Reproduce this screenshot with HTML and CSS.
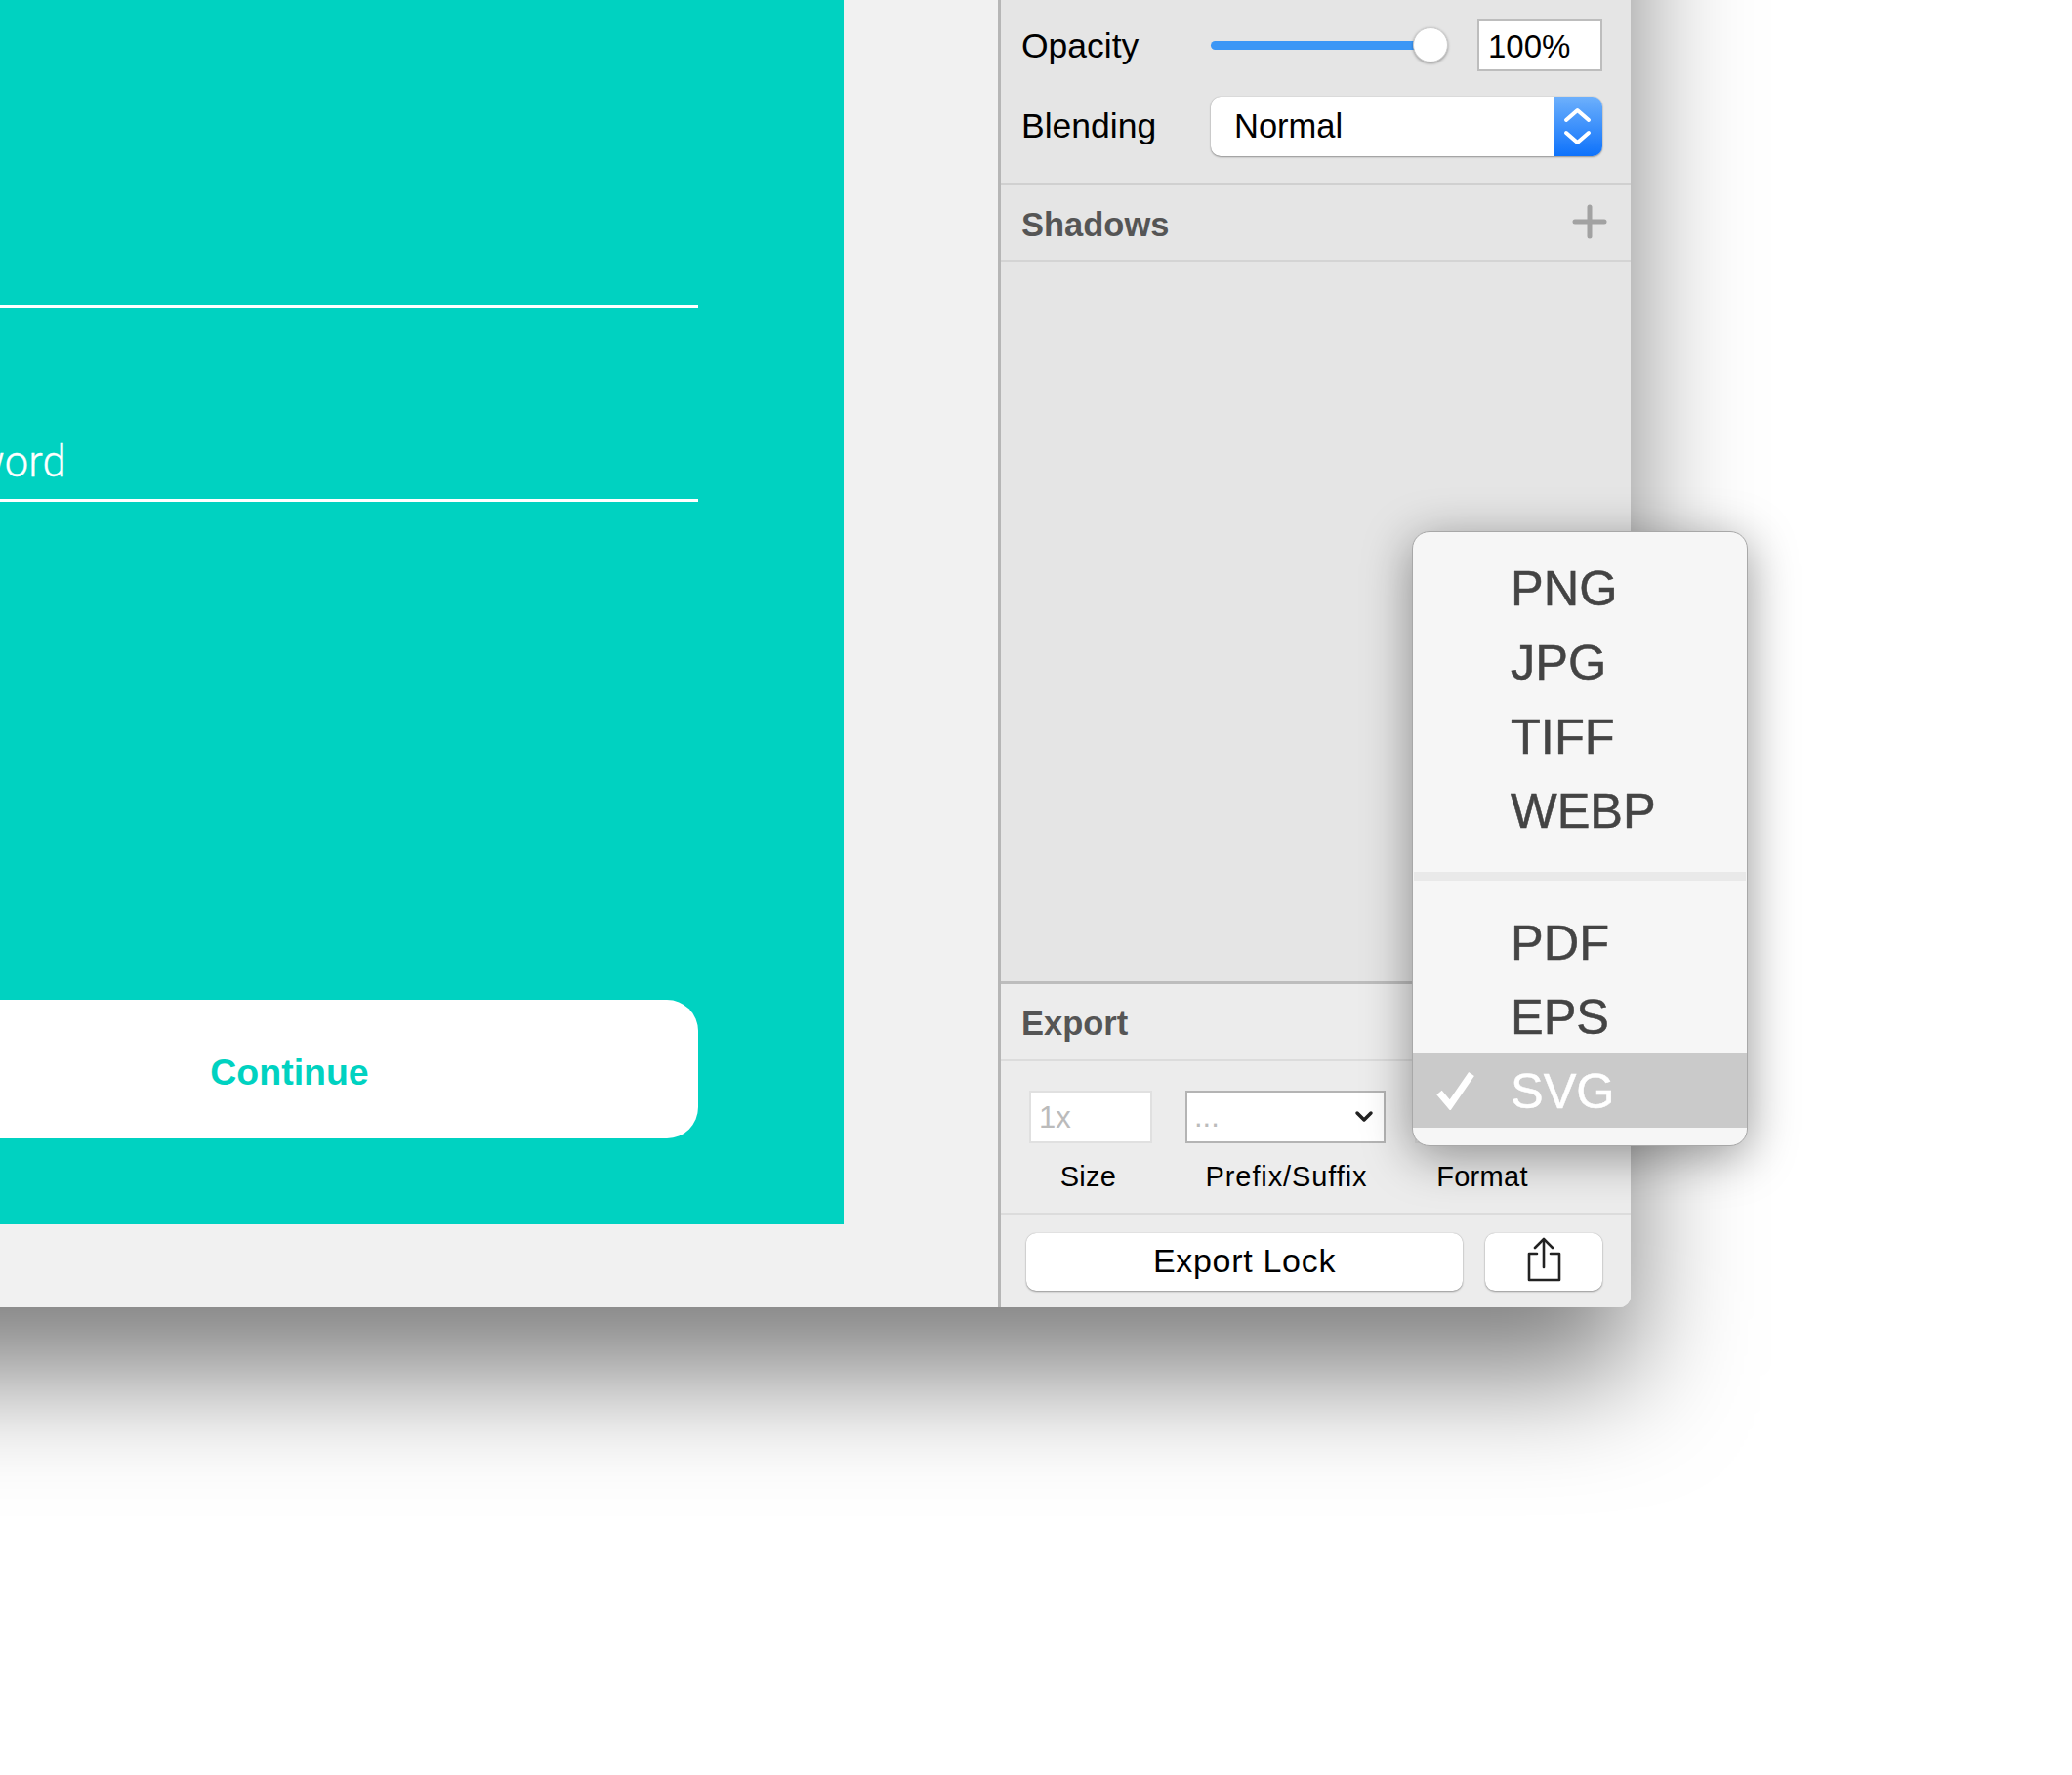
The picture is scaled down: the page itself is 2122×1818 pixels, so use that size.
FILE: index.html
```html
<!DOCTYPE html>
<html lang="en">
<head>
  <meta charset="UTF-8">
  <title>Export Lock</title>
  <link rel="stylesheet" href="styles.css">
</head>
<body>

  <div class="window">

    <!-- artboard -->
    <div class="canvas">
      <div class="artboard">
        <div class="field"></div>
        <div class="field"><span class="field-text">Password</span></div>
        <div class="continue">Continue</div>
      </div>
    </div>

    <!-- inspector -->
    <div class="panel">
      <div class="appearance">
        <div class="row">
          <span class="row-label label-opacity">Opacity</span>
          <div class="slider">
            <div class="track"></div>
            <div class="thumb"></div>
          </div>
          <div class="percent">100%</div>
        </div>
        <div class="row">
          <span class="row-label">Blending</span>
          <div class="blend">
            <span class="blend-value">Normal</span>
            <div class="stepper">
              <svg width="50" height="61" viewBox="0 0 50 61" fill="none" stroke="#fff" stroke-width="4" stroke-linecap="round" stroke-linejoin="round">
                <path d="M13 24 24.5 14 36 24"/>
                <path d="M13 37 24.5 47 36 37"/>
              </svg>
            </div>
          </div>
        </div>
      </div>

      <div class="section-head">
        <span>Shadows</span>
        <svg class="plus" width="36" height="36" viewBox="0 0 36 36" stroke="#a2a2a2" stroke-width="5" stroke-linecap="round">
          <path d="M18 3V33"/>
          <path d="M3 18H33"/>
        </svg>
      </div>

      <div class="empty"></div>

      <div class="export">
        <div class="section-head">
          <span>Export</span>
        </div>
        <div class="export-fields">
          <div class="col col-size">
            <div class="box box-size">1x</div>
            <span class="col-label label-size">Size</span>
          </div>
          <div class="col col-prefix">
            <div class="box box-prefix">
              <span>...</span>
              <svg width="20" height="14" viewBox="0 0 20 14" fill="none" stroke="#222" stroke-width="3.5" stroke-linecap="round" stroke-linejoin="round">
                <path d="M3 3 10 10 17 3"/>
              </svg>
            </div>
            <span class="col-label label-prefix">Prefix/Suffix</span>
          </div>
          <div class="col col-format">
            <div class="box"></div>
            <span class="col-label">Format</span>
          </div>
        </div>
        <div class="export-actions">
          <div class="btn btn-export">Export Lock</div>
          <div class="btn btn-share">
            <svg width="38" height="48" viewBox="0 0 38 48" fill="none" stroke="#222" stroke-width="2.6" stroke-linecap="round" stroke-linejoin="round">
              <path d="M12 17H4V44H35V17H26"/>
              <path d="M19 31V3"/>
              <path d="M10 11 19 2 28 11"/>
            </svg>
          </div>
        </div>
      </div>

      <!-- format menu -->
      <div class="menu">
        <div class="menu-item">PNG</div>
        <div class="menu-item">JPG</div>
        <div class="menu-item">TIFF</div>
        <div class="menu-item">WEBP</div>
        <div class="menu-sep"></div>
        <div class="menu-item">PDF</div>
        <div class="menu-item">EPS</div>
        <div class="menu-item selected">
          <svg class="check" width="40" height="40" viewBox="0 0 40 40" fill="none" stroke="#fff" stroke-width="7">
            <path d="M3 22 14 35 36 3"/>
          </svg>
          SVG
        </div>
      </div>
    </div>

  </div>

</body>
</html>
```

FILE: styles.css
```css
html, body {
  height: 1818px;
  margin: 0;
  padding: 0;
  overflow: hidden;
  background-color: white;
  font-family: "Liberation Sans", Arial, sans-serif;
}

.window {
  display: flex;
  width: 2070px;
  height: 1639px;
  margin: -300px 0 0 -400px;
  background-color: #f1f1f1;
  border-radius: 0 0 12px 0;
  box-shadow: 0 70px 120px rgba(0,0,0,0.5);
}

.canvas {
  flex: 1;
  display: flex;
  padding: 0 158px 85px 200px;
}

.artboard {
  flex: 1;
  display: flex;
  flex-direction: column;
  justify-content: flex-end;
  padding: 0 149px 88px 78px;
  background-color: #00d2c1;
}

.field {
  box-sizing: border-box;
  display: flex;
  align-items: flex-end;
  height: 199px;
  padding-bottom: 12px;
  border-bottom: 3px solid white;
}

.field-text {
  color: white;
  font-family: Roboto, sans-serif;
  font-size: 43.5px;
  font-weight: 300;
  -webkit-text-stroke: 0.3px white;
  line-height: 50px;
}

.continue {
  display: flex;
  align-items: center;
  justify-content: center;
  height: 142px;
  margin-top: 510px;
  padding-top: 6px;
  box-sizing: border-box;
  background-color: white;
  border-radius: 32px;
  color: #00d2c1;
  font-weight: bold;
  font-size: 37.5px;
}

.panel {
  position: relative;
  box-sizing: border-box;
  width: 648px;
  display: flex;
  flex-direction: column;
  background-color: #e5e5e5;
  border-left: 3px solid #b6b6b6;
  border-radius: 0 0 12px 0;
}

.appearance {
  display: flex;
  flex-direction: column;
  gap: 26px;
  padding: 319px 29px 27px 21px;
  border-bottom: 2px solid #d0d0d0;
}

.row {
  display: flex;
  align-items: center;
}

.row-label {
  width: 194px;
  color: black;
  font-size: 35.5px;
}

.label-opacity {
  padding-top: 3px;
}

.slider {
  position: relative;
  display: flex;
  align-items: center;
  width: 243px;
  height: 36px;
}

.track {
  width: 225px;
  height: 9px;
  background-color: #3c97f6;
  border-radius: 5px;
}

.thumb {
  position: absolute;
  right: 0;
  top: 0;
  width: 34px;
  height: 34px;
  background-color: white;
  border: 1px solid #ccc;
  border-radius: 50%;
  box-shadow: 0 1px 3px rgba(0,0,0,0.35);
}

.percent {
  box-sizing: border-box;
  width: 128px;
  height: 54px;
  margin-left: auto;
  padding-left: 9px;
  background-color: white;
  border: 2px solid #bdbdbd;
  font-size: 33px;
  line-height: 54px;
}

.blend {
  flex: 1;
  display: flex;
  height: 61px;
  overflow: hidden;
  background-color: white;
  border-radius: 10px;
  box-shadow: 0 1px 2px rgba(0,0,0,0.35), 0 0 1px rgba(0,0,0,0.3);
}

.blend-value {
  flex: 1;
  padding-left: 24px;
  font-size: 34.5px;
  line-height: 61px;
}

.stepper {
  width: 50px;
  height: 61px;
  background: linear-gradient(#6db0fc, #0e72fb);
}

.stepper svg {
  display: block;
}

.section-head {
  box-sizing: border-box;
  display: flex;
  align-items: center;
  justify-content: space-between;
  height: 79px;
  padding: 5px 24px 0 21px;
  border-bottom: 2px solid #d4d4d4;
  color: #555;
  font-weight: bold;
  font-size: 34.5px;
}

.plus {
  margin-top: -6px;
}

.empty {
  flex: 1;
}

.export {
  background-color: #ececec;
  border-top: 3px solid #bdbdbd;
  border-radius: 0 0 12px 0;
}

.export .section-head {
  height: 79px;
  padding-top: 4px;
  border-bottom-color: #dcdcdc;
}

.export-fields {
  display: flex;
  height: 157px;
  padding: 30px 0 0 29px;
  box-sizing: border-box;
  border-bottom: 2px solid #dcdcdc;
}

.col {
  display: flex;
  flex-direction: column;
  align-items: center;
}

.col-size {
  width: 126px;
  margin-right: 34px;
}

.col-prefix {
  width: 205px;
  margin-right: 30px;
}

.col-format {
  width: 138px;
}

.box {
  box-sizing: border-box;
  width: 100%;
  height: 54px;
  background-color: white;
  border: 2px solid #e0e0e0;
  color: #bbb;
  font-size: 31px;
  line-height: 52px;
}

.box-size {
  padding-left: 8px;
}

.box-prefix {
  display: flex;
  align-items: center;
  justify-content: space-between;
  padding: 0 10px 0 7px;
  border-color: #b4b4b4;
}

.col-label {
  margin-top: 17px;
  color: black;
  font-size: 29px;
  letter-spacing: 0.3px;
  line-height: 34px;
}

.label-size {
  margin-right: 5px;
}

.label-prefix {
  margin-left: 2px;
  letter-spacing: 0.9px;
}

.export-actions {
  display: flex;
  gap: 23px;
  padding: 19px 0 17px 26px;
}

.btn {
  box-sizing: border-box;
  display: flex;
  align-items: center;
  justify-content: center;
  height: 59px;
  padding-bottom: 3px;
  background-color: white;
  border-radius: 10px;
  box-shadow: 0 1px 2px rgba(0,0,0,0.35), 0 0 1px rgba(0,0,0,0.3);
  font-size: 34px;
  letter-spacing: 0.7px;
}

.btn-export {
  width: 447px;
}

.btn-share {
  width: 120px;
}

.menu {
  position: absolute;
  top: 844px;
  right: -120px;
  box-sizing: border-box;
  width: 344px;
  height: 630px;
  padding: 19px 0;
  background-color: #f6f6f6;
  border: 1px solid #a8a8a8;
  border-radius: 18px;
  box-shadow: 0 10px 50px rgba(0,0,0,0.4);
}

.menu-item {
  display: flex;
  align-items: center;
  height: 76px;
  padding-left: 100px;
  color: #444;
  font-size: 50.5px;
  -webkit-text-stroke: 0.5px #444;
}

.menu-item.selected {
  padding-left: 24px;
  background-color: #cacaca;
  color: white;
  -webkit-text-stroke: 0.5px white;
}

.check {
  margin-right: 36px;
}

.menu-sep {
  height: 9px;
  margin: 25px 1px 25px;
  background-color: #e9e9e9;
}
```
